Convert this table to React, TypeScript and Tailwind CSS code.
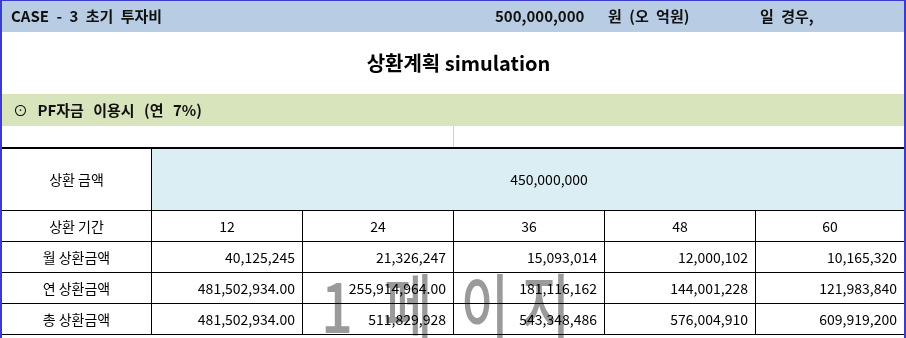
import React from 'react';

const font = { fontFamily: '"Noto Sans CJK KR", "Noto Sans", sans-serif' };

const periods = ['12', '24', '36', '48', '60'];

const rows: Array<{ label: string; values: string[] }> = [
  { label: '월 상환금액', values: ['40,125,245', '21,326,247', '15,093,014', '12,000,102', '10,165,320'] },
  { label: '연 상환금액', values: ['481,502,934.00', '255,914,964.00', '181,116,162', '144,001,228', '121,983,840'] },
  { label: '총 상환금액', values: ['481,502,934.00', '511,829,928', '543,348,486', '576,004,910', '609,919,200'] },
];

const cols = 'grid grid-cols-[150px_151px_151px_151px_151px_148px]';

function Cell({ children, last, align = 'center' }: { children: React.ReactNode; last?: boolean; align?: 'center' | 'right' }) {
  return (
    <div
      className={`flex items-center h-full ${align === 'right' ? 'justify-end pr-[7px]' : 'justify-center'} ${
        last ? '' : 'border-r border-black'
      }`}
    >
      {children}
    </div>
  );
}

export default function App() {
  return (
    <div className="w-[906px] h-[338px] overflow-hidden bg-white relative" style={font}>
      <div className="h-full border-l-2 border-t border-r-2 border-[#3b3bd0] text-black">
        {/* case header */}
        <div className="h-[31px] bg-[#b8cce4] flex items-center pl-[9px] text-[15px] font-bold text-[#111] [word-spacing:4px]">
          <span className="w-[484px]">CASE - 3 초기 투자비</span>
          <span className="w-[113px]">500,000,000</span>
          <span className="w-[152px]">원 (오 억원)</span>
          <span>일 경우,</span>
        </div>

        <div className="h-[62px] flex items-center justify-center pl-[11px] text-[20px] font-bold">
          상환계획 simulation
        </div>

        <div className="h-[32px] bg-[#d8e4bc] flex items-center pl-[11px] text-[15px] font-bold text-[#111] [word-spacing:6px]">
          <span className="font-normal">⊙</span>&nbsp;PF자금 이용시 (연 7%)
        </div>

        <div className="h-[23px] flex border-b-2 border-black">
          <div className="w-[452px] border-r border-[#d0d0d0]" />
        </div>

        {/* repayment table */}
        <div className="text-[14px]">
          <div className={`${cols} h-[62px] border-b border-black`}>
            <Cell>상환 금액</Cell>
            <div className="col-span-5 bg-[#daeef3] flex items-center justify-center pl-[42px]">450,000,000</div>
          </div>
          <div className={`${cols} h-[31px] border-b border-black`}>
            <Cell>상환 기간</Cell>
            {periods.map((p, i) => (
              <Cell key={p} last={i === periods.length - 1}>
                {p}
              </Cell>
            ))}
          </div>
          {rows.map((row) => (
            <div key={row.label} className={`${cols} h-[31px] border-b border-black`}>
              <Cell>{row.label}</Cell>
              {row.values.map((v, i) => (
                <Cell key={i} align="right" last={i === row.values.length - 1}>
                  {v}
                </Cell>
              ))}
            </div>
          ))}
        </div>
      </div>

      {/* page watermark */}
      <div className="absolute left-[297px] top-[268px] flex text-[70px] leading-none font-medium text-[#9a9a9a] mix-blend-multiply pointer-events-none select-none">
        <span className="w-[80px] flex justify-center scale-x-80">1</span>
        <span className="w-[62px] flex justify-center scale-x-75">페</span>
        <span className="w-[92px] flex justify-center scale-x-75">이</span>
        <span className="w-[30px] flex justify-center scale-x-75">지</span>
      </div>
    </div>
  );
}
